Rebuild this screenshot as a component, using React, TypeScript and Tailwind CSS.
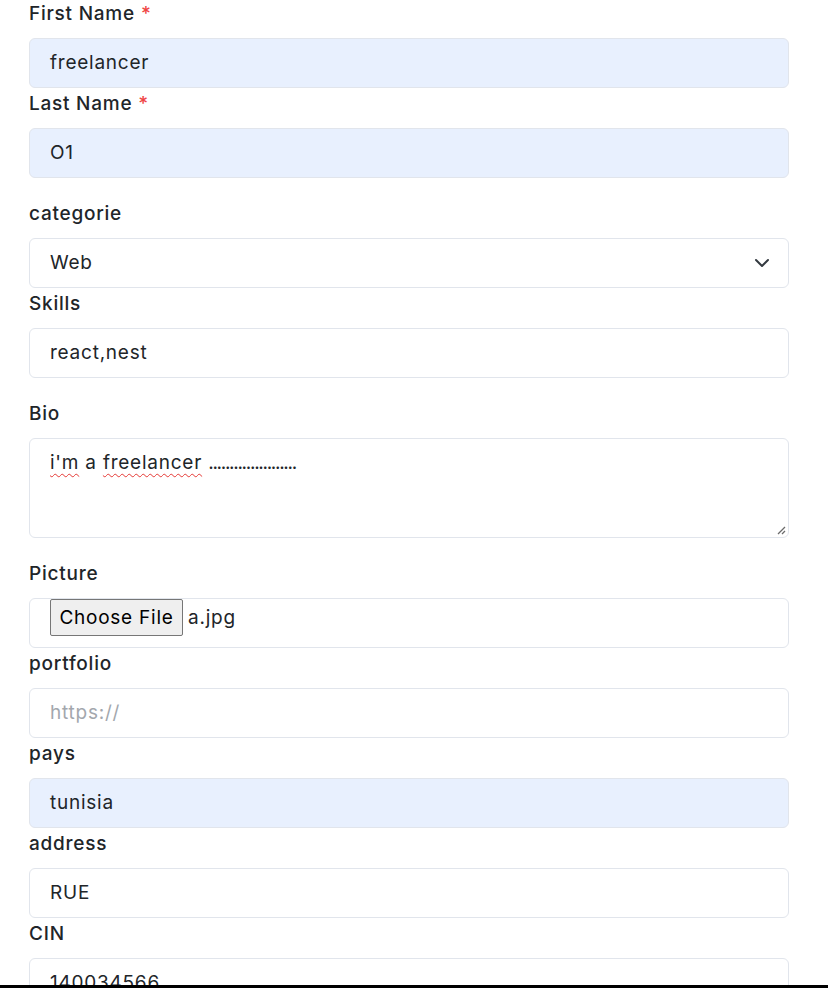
import React from 'react'

const font = { fontFamily: 'Inter, "Noto Sans", sans-serif' }

const labelCls = 'block h-[28px] text-[19px] leading-7 font-medium tracking-[0.04em] text-[#212529]'
const boxCls =
  'flex items-center h-[50px] w-full rounded-md border border-[#e1e5ec] px-5 text-[19px] leading-7 tracking-[0.04em] text-[#212529]'
const autofill = 'bg-[#e8f0fe]'

function Req() {
  return <span className="text-[#ef4444] ml-1.5">*</span>
}

function Field({
  label,
  required,
  spaced,
  children,
}: {
  label: string
  required?: boolean
  spaced?: boolean
  children: React.ReactNode
}) {
  return (
    <div className={spaced ? 'mt-[22px] flex flex-col' : 'mt-[2px] flex flex-col'}>
      <label className={labelCls}>
        {label}
        {required && <Req />}
      </label>
      <div className="mt-[10px]">{children}</div>
    </div>
  )
}

export default function App() {
  return (
    <div className="bg-white w-[828px]" style={font}>
      <div className="h-[985px] overflow-hidden">
        <div className="ml-[29px] w-[760px] -mt-[2px] pb-10">
          <Field label="First Name" required>
            <div className={`${boxCls} ${autofill}`}>freelancer</div>
          </Field>

          <Field label="Last Name" required>
            <div className={`${boxCls} ${autofill}`}>O1</div>
          </Field>

          <Field label="categorie" spaced>
            <div className={`${boxCls} bg-white justify-between pr-[18px]`}>
              <span>Web</span>
              <svg width="16" height="12" viewBox="0 2 16 12" fill="none">
                <path d="m2 5 6 6 6-6" stroke="#343a40" strokeWidth="2" strokeLinecap="round" strokeLinejoin="round" />
              </svg>
            </div>
          </Field>

          <Field label="Skills">
            <div className={`${boxCls} bg-white`}>react,nest</div>
          </Field>

          <Field label="Bio" spaced>
            <div className="relative h-[100px] w-full rounded-md border border-[#e1e5ec] bg-white px-5 py-2.5 text-[19px] leading-7 tracking-[0.04em] text-[#212529]">
              <span className="underline decoration-wavy decoration-[#e53935] decoration-1 underline-offset-[4px]">i'm</span>{' '}
              a{' '}
              <span className="underline decoration-wavy decoration-[#e53935] decoration-1 underline-offset-[4px]">freelancer</span>{' '}
              <span className="tracking-[-1.3px]">.....................</span>
              <svg className="absolute right-[2px] bottom-[2px]" width="10" height="10" viewBox="0 0 10 10">
                <path d="M9 2 2 9M9 6 6 9" stroke="#6b6b6b" strokeWidth="1.3" />
              </svg>
            </div>
          </Field>

          <Field label="Picture" spaced>
            <div className="flex items-start h-[50px] w-full rounded-md border border-[#e1e5ec] bg-white px-5 text-[19px] leading-7 tracking-[0.04em] text-[#212529]">
              <span className="flex items-center justify-center h-[37px] w-[133px] rounded-[2px] border border-[#767676] bg-[#efefef] text-black">
                Choose File
              </span>
              <span className="ml-[5px] h-[37px] flex items-center">a.jpg</span>
            </div>
          </Field>

          <Field label="portfolio">
            <div className={`${boxCls} bg-white text-[#a3a7ad]`}>https://</div>
          </Field>

          <Field label="pays">
            <div className={`${boxCls} ${autofill}`}>tunisia</div>
          </Field>

          <Field label="address">
            <div className={`${boxCls} bg-white`}>RUE</div>
          </Field>

          <Field label="CIN">
            <div className={`${boxCls} bg-white`}>140034566</div>
          </Field>
        </div>
      </div>
      <div className="h-[3px] bg-black" />
    </div>
  )
}
